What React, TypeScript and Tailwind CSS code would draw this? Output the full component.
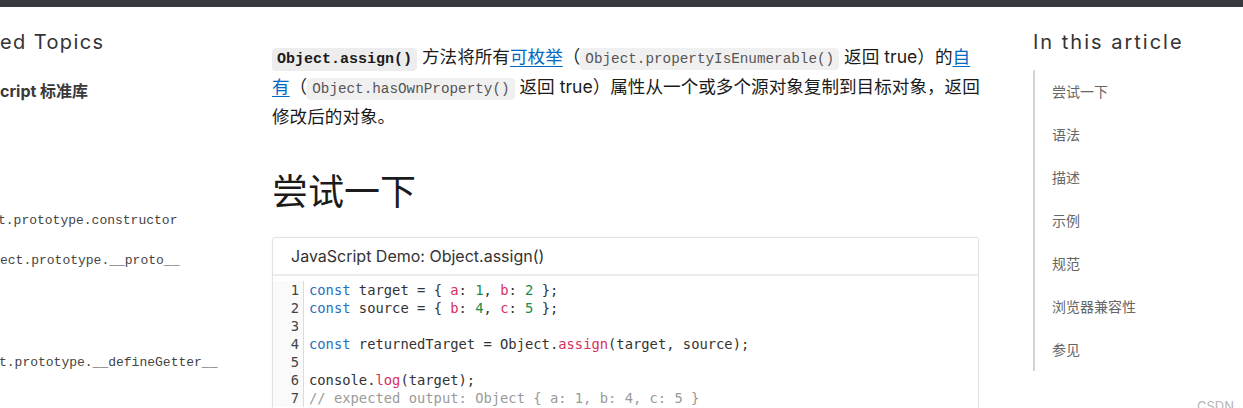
import React from "react";

const sans = { fontFamily: 'Inter, "Noto Sans CJK SC", sans-serif' };

function Code({ children, bold }: { children: React.ReactNode; bold?: boolean }) {
  return (
    <code
      className={
        bold
          ? "rounded-[4px] bg-[#ededed] px-[5px] py-[3px] font-['Liberation_Mono',monospace] text-[15px] font-bold leading-none text-[#1b1b1b]"
          : "rounded-[4px] bg-[#f0f0f0] px-[5px] py-[3px] font-['Liberation_Mono',monospace] text-[14.3px] leading-none text-[#555]"
      }
    >
      {children}
    </code>
  );
}

const K = ({ c }: { c: string }) => <span className="text-[#1f70c1]">{c}</span>;
const P = ({ c }: { c: string }) => <span className="text-[#d62f5d]">{c}</span>;
const N = ({ c }: { c: string }) => <span className="text-[#188a4c]">{c}</span>;

export default function App() {
  const lines: React.ReactNode[] = [
    <>
      <K c="const" /> target = {"{ "}
      <P c="a" />: <N c="1" />, <P c="b" />: <N c="2" /> {"};"}
    </>,
    <>
      <K c="const" /> source = {"{ "}
      <P c="b" />: <N c="4" />, <P c="c" />: <N c="5" /> {"};"}
    </>,
    <>&nbsp;</>,
    <>
      <K c="const" /> returnedTarget = Object.<P c="assign" />(target, source);
    </>,
    <>&nbsp;</>,
    <>
      console.<P c="log" />(target);
    </>,
    <span className="text-[#9a9a9a]">{"// expected output: Object { a: 1, b: 4, c: 5 }"}</span>,
  ];

  const toc = ["尝试一下", "语法", "描述", "示例", "规范", "浏览器兼容性", "参见"];

  return (
    <div className="relative h-[408px] w-[1243px] overflow-hidden bg-white" style={sans}>
      <div className="h-[7px] w-full bg-[#36393d]" />
      <div className="flex">
        {/* left sidebar */}
        <div className="w-[272px] shrink-0 overflow-hidden text-[#333]">
          <div className="mt-[23px] text-[20px] leading-[24px] tracking-[0.07em]">ed Topics</div>
          <div className="mt-[25px] text-[16px] font-bold leading-[24px] text-[#3a3a3a]">cript 标准库</div>
          <div className="ml-[-2px] mt-[108px] whitespace-nowrap font-['Liberation_Mono',monospace] text-[13px] leading-[20px] text-[#444]">
            t.prototype.constructor
          </div>
          <div className="mt-[20px] whitespace-nowrap font-['Liberation_Mono',monospace] text-[13px] leading-[20px] text-[#444]">
            ect.prototype.__proto__
          </div>
          <div className="ml-[-1px] mt-[82px] whitespace-nowrap font-['Liberation_Mono',monospace] text-[13px] leading-[20px] text-[#444]">
            t.prototype.__defineGetter__
          </div>
        </div>

        {/* main */}
        <div className="w-[707px] shrink-0 text-[#1b1b1b]">
          <p className="mt-[35px] whitespace-nowrap text-[17.6px] leading-[30px]">
            <Code bold>Object.assign()</Code> 方法将所有
            <a className="text-[#0069c2] underline underline-offset-[3px]">可枚举</a>（
            <Code>Object.propertyIsEnumerable()</Code> 返回 true）的
            <a className="text-[#0069c2] underline underline-offset-[3px]">自</a>
            <br />
            <a className="text-[#0069c2] underline underline-offset-[3px]">有</a>（
            <Code>Object.hasOwnProperty()</Code> 返回 true）属性从一个或多个源对象复制到目标对象，返回
            <br />
            修改后的对象。
          </p>
          <h2 className="mt-[39px] text-[36px] font-normal leading-[43px] text-[#1b1b1b]">尝试一下</h2>
          <div className="mt-[23px] rounded-t-[3px] border border-[#e2e2e2] shadow-[0_0_2px_rgba(0,0,0,0.06)]">
            <div className="flex h-[38px] items-center border-b-[2px] border-[#ececec] pl-[18px] text-[16px] text-[#333]">
              JavaScript Demo: Object.assign()
            </div>
            <div className="flex pb-[12px] pt-[5px] font-['DejaVu_Sans_Mono',monospace] text-[13.8px] leading-[18px] text-[#333]">
              <div className="w-[31px] shrink-0 border-r border-[#dcdcdc] bg-[#fafafa] pr-[4px] text-right text-[#444]">
                {lines.map((_, i) => (
                  <div key={i}>{i + 1}</div>
                ))}
              </div>
              <div className="pl-[5px]">
                {lines.map((l, i) => (
                  <div key={i} className="whitespace-pre">
                    {l}
                  </div>
                ))}
              </div>
            </div>
          </div>
        </div>

        {/* right toc */}
        <div className="ml-[54px] w-[210px] shrink-0">
          <div className="mt-[23px] text-[20px] leading-[24px] tracking-[0.1em] text-[#333]">In this article</div>
          <div className="mt-[16px] border-l-[2px] border-[#d4d4d4] pl-[17px]">
            {toc.map((t) => (
              <div key={t} className="flex h-[43px] items-center text-[14px] text-[#666]">
                {t}
              </div>
            ))}
          </div>
        </div>
      </div>
      <div className="absolute left-[1197px] top-[398px] text-[13px] leading-[16px] text-[#b5b5b5]">CSDN @</div>
    </div>
  );
}
